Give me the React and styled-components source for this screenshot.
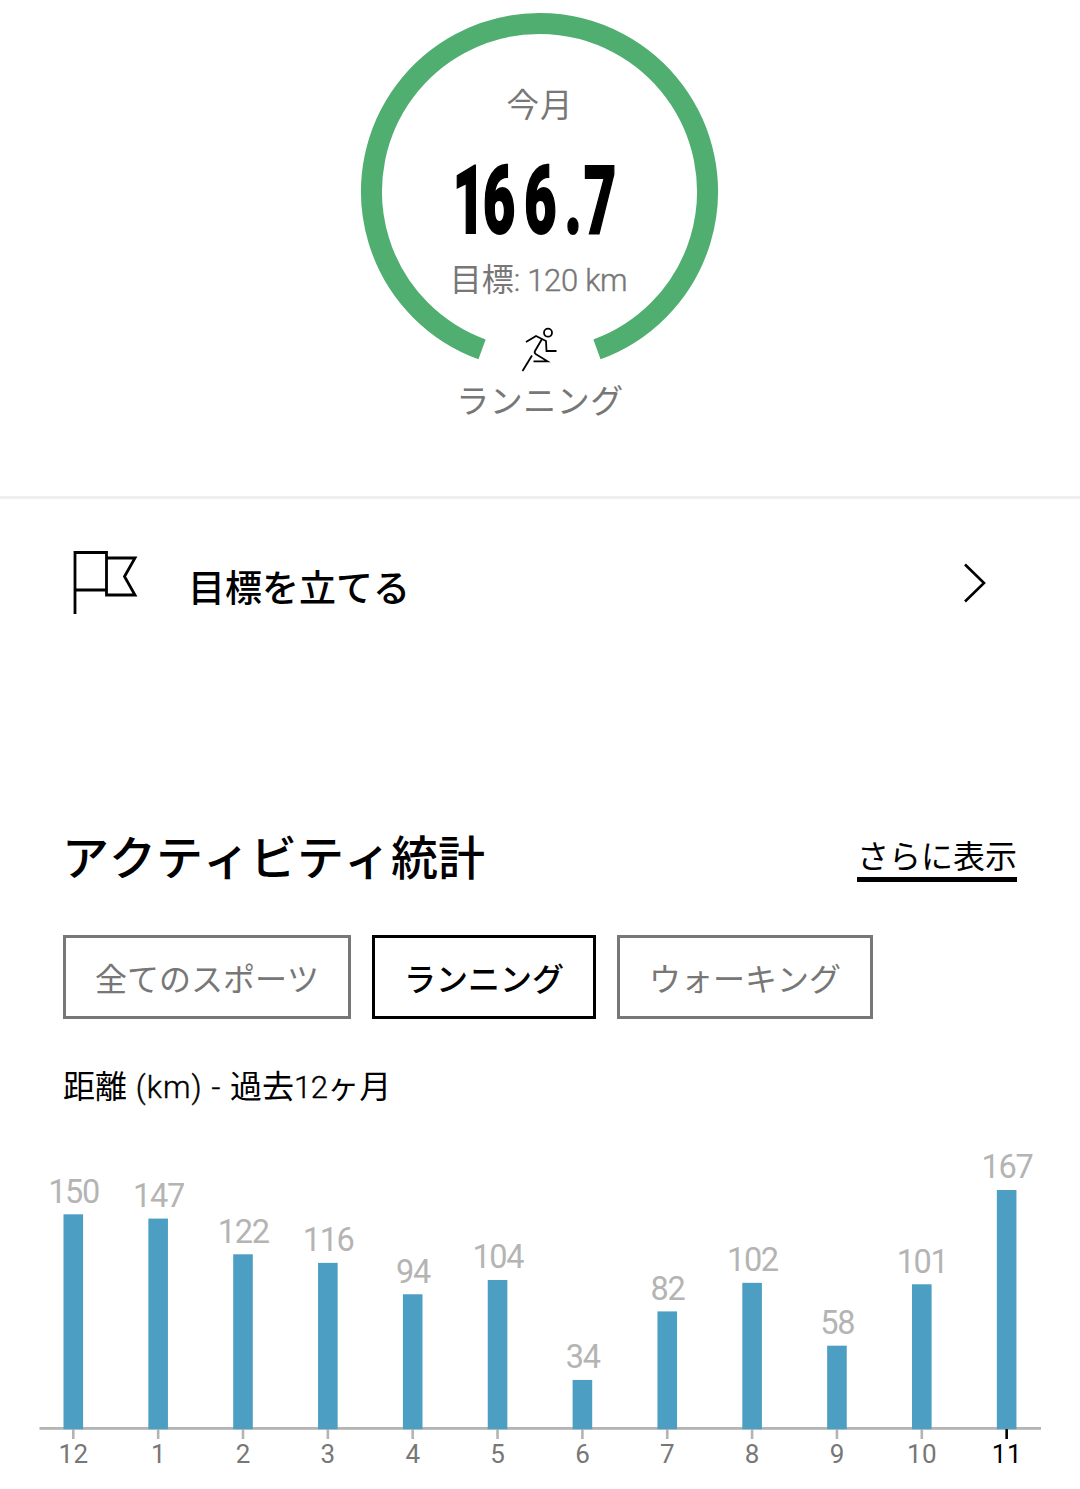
import { useState } from "react";
import styled, { createGlobalStyle } from "styled-components";

const months = [
  { month: 12, distance: 150 },
  { month: 1, distance: 147 },
  { month: 2, distance: 122 },
  { month: 3, distance: 116 },
  { month: 4, distance: 94 },
  { month: 5, distance: 104 },
  { month: 6, distance: 34 },
  { month: 7, distance: 82 },
  { month: 8, distance: 102 },
  { month: 9, distance: 58 },
  { month: 10, distance: 101 },
  { month: 11, distance: 167 },
];

const sports = [
  { id: "all", name: "全てのスポーツ" },
  { id: "running", name: "ランニング" },
  { id: "walking", name: "ウォーキング" },
];

const BASELINE = 288.5;
const UNIT = 1.428;

const DistanceChart = () => (
  <Chart viewBox="0 0 1080 349">
    <rect x="39.5" y="287" width="1001.5" height="2.8" fill="#b4b4b4" />
    {months.map(({ month, distance }, index) => {
      const x = 73.3 + index * 84.85;
      const top = BASELINE - distance * UNIT;
      const current = index === months.length - 1;
      return (
        <g key={month}>
          <rect x={x - 1.3} y="289" width="2.6" height="10" fill={current ? "#000" : "#b4b4b4"} />
          <rect x={x - 9.8} y={top} width="19.6" height={BASELINE + 0.7 - top} fill="#4c9fc3" />
          <BarValue x={x + 0.3} y={top - 11.7}>{distance}</BarValue>
          <MonthLabel x={x + 0.3} y="323" $current={current}>{month}</MonthLabel>
        </g>
      );
    })}
  </Chart>
);

const App = () => {
  const [sport, setSport] = useState("running");

  return (
    <Page>
      <GlobalStyle />
      <GaugeSection>
        <Gauge>
          <Ring viewBox="0 0 360 360">
            <path
              d="M122.04 349.37A168 168 0 1 1 236.96 349.37"
              fill="none"
              stroke="#50ae70"
              strokeWidth="21"
            />
          </Ring>
          <Period>今月</Period>
          <Total viewBox="0 0 180 116">
            <g transform="scale(0.59 1)">
              <text x="4.5 56 126 194.5 227" y="91">166.7</text>
            </g>
          </Total>
          <Target>
            目標<Latin $spacing="-0.3px">: 120 km</Latin>
          </Target>
          <Runner viewBox="0 0 40 48">
            <circle cx="28" cy="8.7" r="4" />
            <path d="M6 18 16 12 26 17 26.5 27H36.5" />
            <path d="M22 15 15 27Q14 29 16 30.2L27.5 37.3H13.5" />
            <path d="M12 31.5 2.5 47" />
          </Runner>
        </Gauge>
        <SportName>ランニング</SportName>
      </GaugeSection>

      <GoalRow>
        <FlagIcon viewBox="0 0 66 66">
          <path d="M2 64V2.5H33.5V40H2M33.5 8H62L51.5 26.5 62 45H33.5V38" />
        </FlagIcon>
        <GoalTitle>目標を立てる</GoalTitle>
        <Chevron viewBox="0 0 24 42">
          <path d="M2 2.5 21 21 2 39.5" />
        </Chevron>
      </GoalRow>

      <StatsHeader>
        <StatsTitle>アクティビティ統計</StatsTitle>
        <MoreLink>さらに表示</MoreLink>
      </StatsHeader>
      <Chips>
        {sports.map(({ id, name }) => (
          <Chip key={id} $active={sport === id} onClick={() => setSport(id)}>
            {name}
          </Chip>
        ))}
      </Chips>
      <ChartTitle>
        距離<Latin $spacing="1.1px"> (km) - </Latin>過去<Latin $spacing="-0.6px">12</Latin>ヶ月
      </ChartTitle>
      <DistanceChart />
    </Page>
  );
};

export default App;

const GlobalStyle = createGlobalStyle`
  * {
    box-sizing: border-box;
  }
  body {
    margin: 0;
    background: #fff;
  }
`;

const Page = styled.div`
  width: 1080px;
  height: 1489px;
  overflow: hidden;
  background: #fff;
  color: #000;
  font-family: "Noto Sans CJK JP", sans-serif;
  font-kerning: none;
`;

const GaugeSection = styled.section`
  display: flex;
  flex-direction: column;
  align-items: center;
  height: 499px;
  border-bottom: 3px solid #eee;
`;

const Gauge = styled.div`
  position: relative;
  display: flex;
  flex-direction: column;
  align-items: center;
  width: 360px;
  height: 374px;
  padding-top: 78px;
`;

const Ring = styled.svg`
  position: absolute;
  top: 0;
  left: 0;
  width: 360px;
  height: 360px;
`;

const Period = styled.div`
  font-size: 32.5px;
  line-height: 50px;
  letter-spacing: 1px;
  color: #777;
`;

const Total = styled.svg`
  flex: none;
  width: 180px;
  height: 116px;
  margin-top: 14px;
  font-family: Roboto, sans-serif;
  font-size: 94px;
  font-weight: 900;
  stroke: #000;
  stroke-width: 2;
`;

const Target = styled.div`
  margin: -6px 3px 0 0;
  font-size: 32px;
  line-height: 50px;
  white-space: nowrap;
  color: #777;
`;

const Latin = styled.span`
  font-family: Roboto, sans-serif;
  font-size: 31px;
  font-weight: 300;
  letter-spacing: ${(props) => props.$spacing};
  white-space: pre;
  -webkit-text-stroke: 0.4px currentColor;
`;

const Runner = styled.svg`
  flex: none;
  width: 40px;
  height: 48px;
  margin-top: 18px;
  fill: none;
  stroke: #000;
  stroke-width: 1.8;
`;

const SportName = styled.div`
  font-size: 33px;
  line-height: 50px;
  letter-spacing: 0.5px;
  color: #777;
`;

const GoalRow = styled.div`
  display: flex;
  align-items: center;
  height: 168px;
  padding: 0 93px 0 73px;
`;

const FlagIcon = styled.svg`
  width: 66px;
  height: 66px;
  fill: none;
  stroke: #000;
  stroke-width: 2.8;
`;

const GoalTitle = styled.div`
  flex: 1;
  margin-left: 49px;
  padding-top: 5px;
  font-size: 37px;
  line-height: 54px;
  font-weight: 500;
`;

const Chevron = styled.svg`
  width: 24px;
  height: 42px;
  fill: none;
  stroke: #000;
  stroke-width: 2.6;
`;

const StatsHeader = styled.div`
  display: flex;
  align-items: center;
  justify-content: space-between;
  height: 84px;
  margin-top: 150px;
  padding: 0 63px 0 62px;
`;

const StatsTitle = styled.h2`
  margin: 0;
  padding-bottom: 8px;
  font-size: 47px;
  line-height: 70px;
  font-weight: 500;
`;

const MoreLink = styled.a`
  height: 46px;
  border-bottom: 5px solid #000;
  font-size: 32px;
  line-height: 36px;
`;

const Chips = styled.div`
  display: flex;
  gap: 21px;
  margin-top: 34px;
  padding: 0 63px;
`;

const Chip = styled.button`
  height: 84px;
  padding: 0 29px;
  border: 3px solid ${(props) => (props.$active ? "#000" : "#777")};
  background: #fff;
  color: ${(props) => (props.$active ? "#000" : "#777")};
  font-family: inherit;
  font-size: 32px;
  font-weight: ${(props) => (props.$active ? 500 : 400)};
  font-kerning: none;
  line-height: 50px;
  white-space: nowrap;
`;

const ChartTitle = styled.div`
  height: 50px;
  margin-top: 40px;
  padding-left: 63px;
  font-size: 32px;
  line-height: 50px;
`;

const Chart = styled.svg`
  display: block;
  width: 1080px;
  height: 349px;
  margin-top: 31px;
  font-family: Roboto, sans-serif;
`;

const BarValue = styled.text`
  fill: #b4b4b4;
  font-size: 32.5px;
  letter-spacing: -1.3px;
  text-anchor: middle;
`;

const MonthLabel = styled.text`
  fill: ${(props) => (props.$current ? "#000" : "#777")};
  font-size: 26px;
  letter-spacing: 0.5px;
  text-anchor: middle;
`;
